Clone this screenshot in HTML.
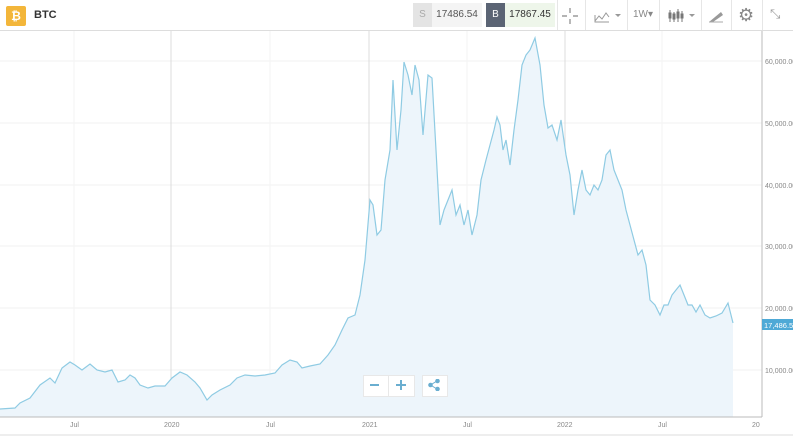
<!DOCTYPE html><html><head><style>
body{margin:0;width:793px;height:436px;overflow:hidden;background:#fff;font-family:"Liberation Sans",sans-serif;position:relative}
.top{position:absolute;left:0;top:0;width:793px;height:30px;border-bottom:1px solid #ddd;background:#fff}
.logo{position:absolute;left:6px;top:6px;width:20px;height:20px;background:#f3b63a;border-radius:2px;color:#fff;font-size:12px;font-weight:bold;text-align:center;line-height:20px}
.t{position:absolute;font-size:11px;color:#333}
.btn{position:absolute;top:3px;height:24px;font-size:10px;line-height:24px;text-align:center;color:#888}
.sep{position:absolute;top:0;width:1px;height:30px;background:#e6e6e6}
</style></head><body>
<div class="top">
<div class="logo">₿</div>
<div class="t" style="left:34px;top:9px;font-weight:bold;font-size:11px">BTC</div>
<div class="btn" style="left:413px;width:19px;background:#e4e4e4;color:#aaa">S</div>
<div class="btn" style="left:432px;width:50px;color:#555;background:#f4f4f4">17486.54</div>
<div class="btn" style="left:486px;width:19px;background:#5b6474;color:#fff">B</div>
<div class="btn" style="left:505px;width:50px;color:#333;background:#eef6ea">17867.45</div>
<div class="sep" style="left:557px"></div>
<svg style="position:absolute;left:561px;top:7px" width="18" height="18" stroke="#888" stroke-width="1.2"><path d="M9 1v5M9 12v5M1 9h5M12 9h5"/></svg>
<div class="sep" style="left:585px"></div>
<svg style="position:absolute;left:594px;top:9px" width="30" height="14" fill="none" stroke="#999"><path d="M1 12l4-5 3 3 4-6 3 4M1 6v7h14" /><path d="M21 5l3 3 3-3" fill="#999" stroke="none"/></svg>
<div class="sep" style="left:627px"></div>
<div class="btn" style="left:630px;width:26px">1W▾</div>
<div class="sep" style="left:659px"></div>
<svg style="position:absolute;left:668px;top:8px" width="30" height="16" stroke="#777"><path d="M2 2v12M6 4v10M10 1v13M14 3v11"/><path d="M1 5h2v5H1zM5 6h2v5H5zM9 4h2v6H9zM13 6h2v4h-2z" fill="#777"/><path d="M21 6l3 3 3-3" fill="#999" stroke="none"/></svg>
<div class="sep" style="left:701px"></div>
<svg style="position:absolute;left:708px;top:9px" width="16" height="14"><path d="M1 13L13 3l2 3L5 13z" fill="#999"/><path d="M1 13h14" stroke="#aaa"/></svg>
<div class="sep" style="left:731px"></div>
<div style="position:absolute;left:738px;top:5px;font-size:18px;color:#888">⚙</div>
<div class="sep" style="left:762px"></div>
<div style="position:absolute;left:770px;top:6px;font-size:13px;color:#999">⤡</div>
</div>
<svg style="position:absolute;left:0;top:31px" width="793" height="405">
<g stroke="#f2f2f2"><path d="M0 30H762M0 92H762M0 154H762M0 215H762M0 277H762M0 339H762"/></g>
<g stroke="#f3f3f3"><path d="M74 0V386M270 0V386M467 0V386M662 0V386"/></g>
<g stroke="#dcdcdc"><path d="M171 0V386M369 0V386M565 0V386"/></g>
<path fill="#edf5fb" stroke="none" d="M0 378 L15 377 20 372 30 367 40 354 50 347 55 352 62 337 70 331 75 334 82 339 90 333 97 339 105 341 112 339 118 351 125 349 130 344 135 347 140 354 148 357 155 355 165 355 172 347 180 341 187 344 195 351 200 357 207 369 212 364 220 359 230 354 237 347 245 344 255 345 265 344 275 342 282 334 290 329 297 331 302 337 310 335 320 333 328 324 335 314 342 299 348 287 355 284 360 264 365 229 370 169 373 174 377 204 381 199 385 149 390 119 393 49 397 119 401 79 404 31 408 44 412 64 415 34 419 49 423 104 428 44 432 47 436 119 440 194 444 179 448 169 452 159 456 184 460 174 464 194 468 179 472 204 477 184 481 149 486 129 490 114 494 99 497 86 500 94 503 119 506 109 510 134 514 99 518 69 522 34 526 24 530 19 535 7 540 34 544 74 548 97 552 94 557 109 561 89 566 124 570 144 574 184 578 159 582 139 586 159 590 164 594 154 598 159 602 149 606 124 610 119 614 139 618 149 622 159 626 179 630 194 634 209 638 224 642 219 646 234 650 269 655 274 660 284 664 274 668 274 672 264 676 259 680 254 684 264 688 274 692 274 696 281 700 274 705 284 710 287 716 285 722 282 728 272 733 292 L733 386 L0 386Z"/>
<path fill="none" stroke="#8fcbe3" stroke-width="1.2" d="M0 378 L15 377 20 372 30 367 40 354 50 347 55 352 62 337 70 331 75 334 82 339 90 333 97 339 105 341 112 339 118 351 125 349 130 344 135 347 140 354 148 357 155 355 165 355 172 347 180 341 187 344 195 351 200 357 207 369 212 364 220 359 230 354 237 347 245 344 255 345 265 344 275 342 282 334 290 329 297 331 302 337 310 335 320 333 328 324 335 314 342 299 348 287 355 284 360 264 365 229 370 169 373 174 377 204 381 199 385 149 390 119 393 49 397 119 401 79 404 31 408 44 412 64 415 34 419 49 423 104 428 44 432 47 436 119 440 194 444 179 448 169 452 159 456 184 460 174 464 194 468 179 472 204 477 184 481 149 486 129 490 114 494 99 497 86 500 94 503 119 506 109 510 134 514 99 518 69 522 34 526 24 530 19 535 7 540 34 544 74 548 97 552 94 557 109 561 89 566 124 570 144 574 184 578 159 582 139 586 159 590 164 594 154 598 159 602 149 606 124 610 119 614 139 618 149 622 159 626 179 630 194 634 209 638 224 642 219 646 234 650 269 655 274 660 284 664 274 668 274 672 264 676 259 680 254 684 264 688 274 692 274 696 281 700 274 705 284 710 287 716 285 722 282 728 272 733 292"/>
<path d="M762 0V386M0 386H762" stroke="#bbb"/>
<g fill="#888" font-size="7" font-family="Liberation Sans"><text x="765" y="33">60,000.00</text><text x="765" y="95">50,000.00</text><text x="765" y="157">40,000.00</text><text x="765" y="218">30,000.00</text><text x="765" y="280">20,000.00</text><text x="765" y="342">10,000.00</text>
<text x="70" y="396">Jul</text><text x="164" y="396">2020</text><text x="266" y="396">Jul</text><text x="362" y="396">2021</text><text x="463" y="396">Jul</text><text x="557" y="396">2022</text><text x="658" y="396">Jul</text><text x="752" y="396">20</text></g>
<rect x="762" y="288" width="31" height="11" fill="#4ea9d6"/><text x="764" y="297" fill="#fff" font-size="7.5" font-family="Liberation Sans">17,486.54</text>
<path d="M0 404H793" stroke="#ddd"/>
</svg>
<div style="position:absolute;left:363px;top:375px;width:50px;height:20px;background:#fff;border:1px solid #e8e8e8"></div>
<div style="position:absolute;left:388px;top:376px;width:1px;height:20px;background:#e8e8e8"></div>
<div style="position:absolute;left:370px;top:384px;width:9px;height:2px;background:#6aaed0"></div>
<div style="position:absolute;left:396px;top:384px;width:10px;height:2px;background:#6aaed0"></div>
<div style="position:absolute;left:400px;top:380px;width:2px;height:10px;background:#6aaed0"></div>
<div style="position:absolute;left:422px;top:375px;width:24px;height:20px;background:#fff;border:1px solid #e8e8e8"></div>
<svg style="position:absolute;left:428px;top:379px" width="12" height="12" fill="#6aaed0" stroke="#6aaed0"><circle cx="9.5" cy="2" r="1.8"/><circle cx="2.5" cy="6" r="1.8"/><circle cx="9.5" cy="10" r="1.8"/><path d="M9 2L2.5 6 9 10" fill="none"/></svg>
</body></html>
